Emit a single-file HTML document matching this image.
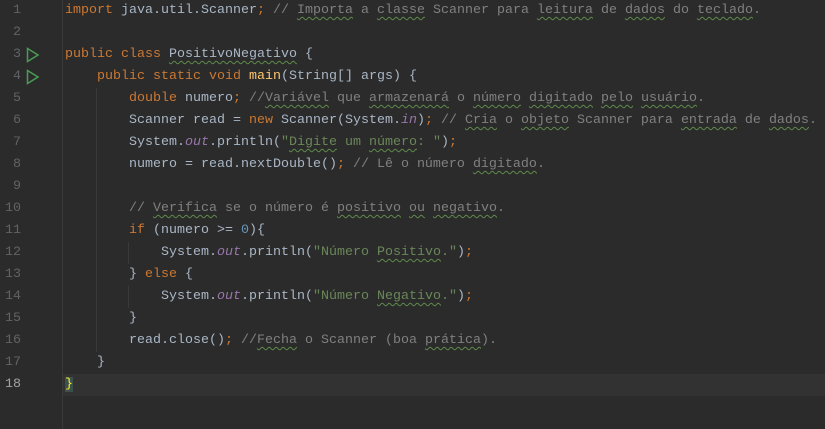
<!DOCTYPE html>
<html><head><style>
body{margin:0;width:825px;height:429px;background:#2b2b2b;overflow:hidden;font-family:"Liberation Mono",monospace;font-size:13.33px;}
#g{position:absolute;left:0;top:0;width:62px;height:429px;background:#2b2b2b;border-right:1px solid #393939;}
.ln{position:absolute;left:0;width:21px;text-align:right;color:#606366;height:22px;line-height:22px;}
.cur{color:#a4a3a3}
.run{position:absolute;left:27px;width:0;height:0;border-left:10px solid transparent;}
#hl{position:absolute;left:0;top:374px;width:825px;height:22px;background:#323232;}
.l{position:absolute;left:65px;height:22px;line-height:22px;white-space:pre;color:#a9b7c6;}
.k{color:#cc7832}.c{color:#808080}.s{color:#6a8759}.n{color:#6897bb}.m{color:#ffc66d}.p{color:#9876aa;font-style:italic}
.w{text-decoration:underline wavy #5f8a4a;text-decoration-thickness:1px;text-underline-offset:3px}
.guide{position:absolute;width:1px;background:#393939;}
</style></head><body>
<div id="hl"></div>
<div id="g"></div>
<div class="guide" style="left:96px;top:88px;height:264px"></div>
<div class="guide" style="left:128px;top:242px;height:22px"></div>
<div class="guide" style="left:128px;top:286px;height:22px"></div>
<div class="ln" style="top:0">1</div><div class="ln" style="top:44px">3</div><div class="ln" style="top:66px">4</div>
<div class="ln" style="top:22px">2</div><div class="ln" style="top:88px">5</div><div class="ln" style="top:110px">6</div>
<div class="ln" style="top:132px">7</div><div class="ln" style="top:154px">8</div><div class="ln" style="top:176px">9</div>
<div class="ln" style="top:198px">10</div><div class="ln" style="top:220px">11</div><div class="ln" style="top:242px">12</div>
<div class="ln" style="top:264px">13</div><div class="ln" style="top:286px">14</div><div class="ln" style="top:308px">15</div>
<div class="ln" style="top:330px">16</div><div class="ln" style="top:352px">17</div><div class="ln cur" style="top:374px">18</div>
<svg style="position:absolute;left:26px;top:47px" width="14" height="16"><path d="M1.5 1.5 L12 8 L1.5 14.5 Z" fill="none" stroke="#499c54" stroke-width="1.5"/></svg>
<svg style="position:absolute;left:26px;top:69px" width="14" height="16"><path d="M1.5 1.5 L12 8 L1.5 14.5 Z" fill="none" stroke="#499c54" stroke-width="1.5"/></svg>
<div class="l" style="top:0"><span class="k">import</span> java.util.Scanner<span class="k">;</span> <span class="c">// <span class="w">Importa</span> a <span class="w">classe</span> Scanner para <span class="w">leitura</span> de <span class="w">dados</span> do <span class="w">teclado</span>.</span></div>
<div class="l" style="top:44px"><span class="k">public class</span> <span class="w">PositivoNegativo</span> {</div>
<div class="l" style="top:66px">    <span class="k">public static void</span> <span class="m">main</span>(String[] args) {</div>
<div class="l" style="top:88px">        <span class="k">double</span> numero<span class="k">;</span> <span class="c">//<span class="w">Variável</span> que <span class="w">armazenará</span> o <span class="w">número</span> <span class="w">digitado</span> <span class="w">pelo</span> <span class="w">usuário</span>.</span></div>
<div class="l" style="top:110px">        Scanner read = <span class="k">new</span> Scanner(System.<span class="p">in</span>)<span class="k">;</span> <span class="c">// <span class="w">Cria</span> o <span class="w">objeto</span> Scanner para <span class="w">entrada</span> de <span class="w">dados</span>.</span></div>
<div class="l" style="top:132px">        System.<span class="p">out</span>.println(<span class="s">"<span class="w">Digite</span> um <span class="w">número</span>: "</span>)<span class="k">;</span></div>
<div class="l" style="top:154px">        numero = read.nextDouble()<span class="k">;</span> <span class="c">// Lê o número <span class="w">digitado</span>.</span></div>
<div class="l" style="top:198px">        <span class="c">// <span class="w">Verifica</span> se o número é <span class="w">positivo</span> <span class="w">ou</span> <span class="w">negativo</span>.</span></div>
<div class="l" style="top:220px">        <span class="k">if</span> (numero &gt;= <span class="n">0</span>){</div>
<div class="l" style="top:242px">            System.<span class="p">out</span>.println(<span class="s">"Número <span class="w">Positivo</span>."</span>)<span class="k">;</span></div>
<div class="l" style="top:264px">        } <span class="k">else</span> {</div>
<div class="l" style="top:286px">            System.<span class="p">out</span>.println(<span class="s">"Número <span class="w">Negativo</span>."</span>)<span class="k">;</span></div>
<div class="l" style="top:308px">        }</div>
<div class="l" style="top:330px">        read.close()<span class="k">;</span> <span class="c">//<span class="w">Fecha</span> o Scanner (boa <span class="w">prática</span>).</span></div>
<div class="l" style="top:352px">    }</div>
<div class="l" style="top:374px"><span style="background:#3b514d;color:#ffef28">}</span></div>
</body></html>
